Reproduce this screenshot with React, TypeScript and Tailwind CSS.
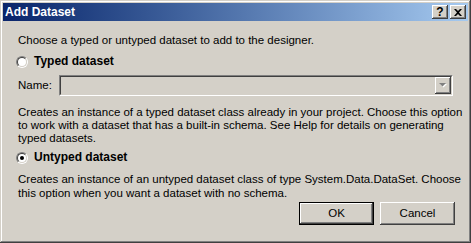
const font = { fontFamily: '"Liberation Sans", Arial, sans-serif' };

function Radio({ checked }: { checked?: boolean }) {
  return (
    <div className="w-[12px] h-[12px] rounded-full border border-t-[#808080] border-l-[#808080] border-b-white border-r-white">
      <div className="w-full h-full rounded-full border border-t-[#404040] border-l-[#404040] border-b-[#d4d0c8] border-r-[#d4d0c8] bg-white flex items-center justify-center">
        {checked ? <div className="w-[4px] h-[4px] rounded-full bg-black" /> : null}
      </div>
    </div>
  );
}

function CaptionButton({ children }: { children: React.ReactNode }) {
  return (
    <div className="w-[16px] h-[14px] bg-[#d4d0c8] shadow-[inset_-1px_-1px_#404040,inset_1px_1px_#ffffff,inset_-2px_-2px_#808080] flex items-center justify-center">
      {children}
    </div>
  );
}

function PushButton({ label, isDefault }: { label: string; isDefault?: boolean }) {
  return (
    <div
      className={
        isDefault
          ? "w-[75px] h-[23px] border border-black bg-[#d4d0c8] shadow-[inset_-1px_-1px_#404040,inset_1px_1px_#ffffff,inset_-2px_-2px_#808080] flex items-center justify-center text-[11.5px] text-black"
          : "w-[75px] h-[23px] bg-[#d4d0c8] shadow-[inset_-1px_-1px_#404040,inset_1px_1px_#ffffff,inset_-2px_-2px_#808080] flex items-center justify-center text-[11.5px] text-black"
      }
    >
      {label}
    </div>
  );
}

export default function App() {
  return (
    <div
      style={font}
      className="w-[471px] h-[243px] bg-[#d4d0c8] p-[3px] shadow-[inset_-1px_-1px_#404040,inset_1px_1px_#d4d0c8,inset_-2px_-2px_#808080,inset_2px_2px_#ffffff] flex flex-col text-black"
    >
      {/* title bar */}
      <div className="h-[18px] bg-gradient-to-r from-[#0a246a] to-[#a6caf0] flex items-center justify-between pl-[2px] pr-[2px]">
        <span className="text-white font-bold text-[12px] leading-[18px]">Add Dataset</span>
        <div className="flex gap-[2px]">
          <CaptionButton>
            <span className="font-bold text-[12px] leading-none">?</span>
          </CaptionButton>
          <CaptionButton>
            <svg width="8" height="7" viewBox="0 0 8 7">
              <path d="M0 0h2l2 2 2-2h2L5 3.5 8 7H6L4 5 2 7H0l3-3.5z" fill="#000" />
            </svg>
          </CaptionButton>
        </div>
      </div>

      <div className="flex flex-col px-[15px] text-[11.5px] leading-[13px] whitespace-nowrap">
        <div className="mt-[13px]">Choose a typed or untyped dataset to add to the designer.</div>

        <div className="mt-[8px] flex items-center gap-[6px] ml-[-2px] h-[13px]">
          <Radio />
          <span className="font-bold text-[12px]">Typed dataset</span>
        </div>

        <div className="mt-[7px] flex items-center h-[21px]">
          <span className="w-[41px]">Name:</span>
          <div className="w-[396px] h-[21px] border border-t-[#808080] border-l-[#808080] border-b-white border-r-white">
            <div className="w-full h-full border border-t-[#404040] border-l-[#404040] border-b-[#d4d0c8] border-r-[#d4d0c8] bg-[#d4d0c8] flex justify-end">
              <div className="w-[16px] h-[17px] bg-[#d4d0c8] shadow-[inset_-1px_-1px_#404040,inset_1px_1px_#ffffff,inset_-2px_-2px_#808080] flex items-center justify-center">
                <svg width="8" height="5" viewBox="0 0 8 5">
                  <path d="M1 1h7L4.5 4.5z" fill="#ffffff" />
                  <path d="M0 0h7L3.5 3.5z" fill="#808080" />
                </svg>
              </div>
            </div>
          </div>
        </div>

        <div className="mt-[10px]">
          Creates an instance of a typed dataset class already in your project. Choose this option
          <br />
          to work with a dataset that has a built-in schema. See Help for details on generating
          <br />
          typed datasets.
        </div>

        <div className="mt-[6px] flex items-center gap-[6px] ml-[-2px] h-[13px]">
          <Radio checked />
          <span className="font-bold text-[12px]">Untyped dataset</span>
        </div>

        <div className="mt-[8px] leading-[14px]">
          Creates an instance of an untyped dataset class of type System.Data.DataSet. Choose
          <br />
          this option when you want a dataset with no schema.
        </div>

        <div className="mt-[2px] flex justify-end gap-[6px] mr-[-2px]">
          <PushButton label="OK" isDefault />
          <PushButton label="Cancel" />
        </div>
      </div>
    </div>
  );
}
